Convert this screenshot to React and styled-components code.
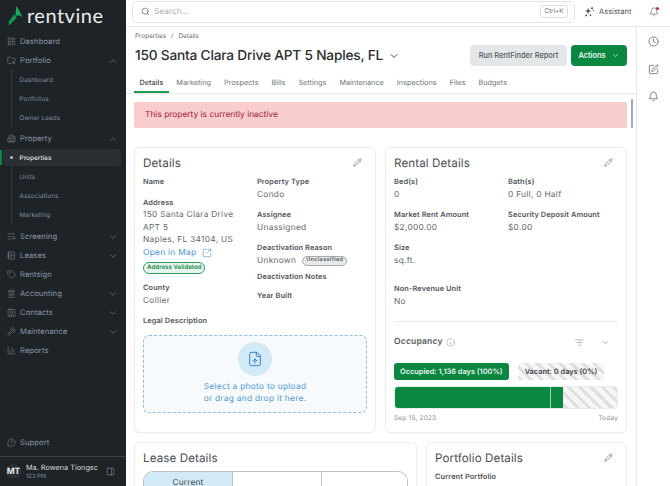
import React from 'react';
import styled, { createGlobalStyle } from 'styled-components';
import {
  Bell,
  Building2,
  ChartColumn,
  ChevronDown,
  ChevronUp,
  Clock,
  Contact,
  FileUp,
  FolderSearch,
  Info,
  Landmark,
  LayoutDashboard,
  ListFilter,
  MessageCircleQuestion,
  NotebookText,
  PanelRight,
  Pencil,
  Search,
  SquareArrowOutUpRight,
  SquarePen,
  Tag,
  TextSearch,
  Wrench,
} from 'lucide-react';

const GlobalStyle = createGlobalStyle`
  html, body {
    margin: 0;
    padding: 0;
    height: 100%;
    overflow: hidden;
    background: #fff;
    font-family: Inter, "Liberation Sans", sans-serif;
    text-rendering: geometricPrecision;
  }
  * {
    box-sizing: border-box;
  }
`;

const Shell = styled.div`
  display: flex;
  width: 670px;
  height: 486px;
  overflow: hidden;
`;

/* sidebar */
const Sidebar = styled.aside`
  flex: 0 0 126px;
  width: 126px;
  min-width: 0;
  overflow: hidden;
  display: flex;
  flex-direction: column;
  background: #1e2327;
  color: #8b95a6;
`;

const Brand = styled.div`
  display: flex;
  align-items: center;
  height: 32px;
  padding: 0 0 0 8px;
  gap: 4px;
`;

const BrandName = styled.span`
  color: #e9ebec;
  font-family: Lato, Inter, sans-serif;
  font-size: 20px;
  font-weight: 400;
  letter-spacing: 0.5px;
  line-height: 32px;
`;

const Nav = styled.nav`
  display: flex;
  flex-direction: column;
  flex: 1;
`;

const NavRow = styled.div`
  display: flex;
  align-items: center;
  height: 19px;
  padding: 0 8px 0 7px;
  gap: 4px;
  font-size: 7.6px;
  letter-spacing: 0.1px;
  margin-top: ${p => p.$top || 0}px;
  svg:first-child {
    flex: none;
    color: #7c8490;
  }
`;

const NavLabel = styled.span`
  flex: 1;
`;

const SubList = styled.div`
  position: relative;
  display: flex;
  flex-direction: column;
  &::before {
    content: '';
    position: absolute;
    left: 11px;
    top: 0;
    bottom: 0;
    width: 1px;
    background: #343a3f;
  }
`;

const SubRow = styled.div`
  position: relative;
  display: flex;
  align-items: center;
  height: ${p => (p.$active ? 17 : 19)}px;
  margin: ${p => (p.$active ? '1px 5px 1px 3px' : '0 5px 0 3px')};
  padding-left: 16.5px;
  font-size: 6.3px;
  letter-spacing: 0.1px;
  border-radius: 4px;
  color: ${p => (p.$active ? '#e4e7ea' : '#7f8a9c')};
  font-weight: ${p => (p.$active ? 500 : 400)};
  background: ${p => (p.$active ? '#2a2f33' : 'transparent')};
`;

const ActiveDot = styled.span`
  position: absolute;
  left: 7px;
  top: 7px;
  width: 3px;
  height: 3px;
  border-radius: 50%;
  background: #b5bbc2;
`;

const ActiveBar = styled.span`
  position: absolute;
  left: -3px;
  top: 1px;
  width: 2px;
  height: 15px;
  background: #0a8841;
`;

const UserBar = styled.div`
  display: flex;
  align-items: center;
  height: 30px;
  margin-top: 4px;
  padding: 0 11px 0 6px;
  border-top: 1px solid #3a3f43;
  gap: 5px;
`;

const Avatar = styled.div`
  flex: none;
  display: flex;
  align-items: center;
  justify-content: center;
  width: 15px;
  height: 15px;
  border-radius: 50%;
  background: #2a2f33;
  font-size: 8.5px;
  font-weight: 700;
  color: #e9ebec;
`;

const UserText = styled.div`
  flex: 1;
  min-width: 0;
  overflow: hidden;
  white-space: nowrap;
  font-size: 7.3px;
  line-height: 9px;
  color: #d5d8db;
  small {
    display: block;
    font-size: 5.8px;
    color: #7f8a9c;
  }
`;

/* main column */
const Main = styled.div`
  flex: 1;
  min-width: 0;
  display: flex;
  flex-direction: column;
`;

const TopBar = styled.header`
  flex: 0 0 27px;
  display: flex;
  align-items: center;
  padding: 0 11px 3px 6px;
  border-bottom: 1px solid #e8e9ea;
`;

const SearchBox = styled.div`
  flex: 0 0 443px;
  height: 22px;
  display: flex;
  align-items: center;
  padding: 0 6px 0 8px;
  gap: 4px;
  border: 1px solid #e3e4e5;
  border-radius: 5px;
  color: #a9adb1;
  font-size: 8.3px;
`;

const SearchText = styled.span`
  flex: 1;
`;

const Kbd = styled.span`
  padding: 1px 3.5px;
  border: 1px solid #dcdddf;
  border-radius: 3px;
  font-size: 6.3px;
  line-height: 9px;
  color: #6b7075;
`;

const Assistant = styled.div`
  display: flex;
  align-items: center;
  margin-left: 9px;
  gap: 4px;
  font-size: 7.5px;
  color: #4c5157;
  flex: 1;
`;

const BellWrap = styled.div`
  position: relative;
  display: flex;
  color: #55595e;
`;

const RedDot = styled.span`
  position: absolute;
  right: 0;
  top: 0;
  width: 3px;
  height: 3px;
  border-radius: 50%;
  background: #c8242f;
`;

const Body = styled.div`
  flex: 1;
  min-height: 0;
  display: flex;
`;

const Content = styled.main`
  position: relative;
  flex: 1;
  min-width: 0;
  overflow: hidden;
`;

const Rail = styled.div`
  flex: 0 0 34px;
  display: flex;
  flex-direction: column;
  align-items: center;
  padding-top: 9px;
  gap: 16.5px;
  border-left: 1px solid #e8e9ea;
  color: #55595e;
`;

const Crumbs = styled.div`
  display: flex;
  gap: 5px;
  padding: 3px 0 0 9px;
  font-size: 6.4px;
  line-height: 12px;
  color: #6a6f74;
`;

const TitleRow = styled.div`
  display: flex;
  align-items: center;
  height: 21px;
  margin-top: 3px;
  padding: 0 9px;
`;

const Title = styled.h1`
  margin: 0;
  font-size: 13.7px;
  font-weight: 500;
  letter-spacing: -0.2px;
  color: #2b2e31;
  white-space: nowrap;
`;

const TitleChevron = styled.span`
  display: flex;
  margin-left: 5px;
  color: #3c4044;
  flex: 1;
`;

const GhostButton = styled.button`
  height: 21px;
  padding: 0;
  margin-right: 4px;
  width: 97px;
  border: 0;
  border-radius: 4px;
  background: #e4e7e8;
  color: #53575b;
  font: 500 7.4px Inter, sans-serif;
  white-space: nowrap;
`;

const PrimaryButton = styled.button`
  display: flex;
  align-items: center;
  justify-content: center;
  gap: 5px;
  height: 21px;
  width: 56px;
  border: 0;
  border-radius: 4px;
  background: #0a8841;
  color: #e9f5ee;
  font: 600 7.4px Inter, sans-serif;
`;

const Tabs = styled.div`
  display: flex;
  height: 21px;
  margin-top: 7px;
  padding-left: 8px;
  gap: 2px;
  border-bottom: 1px solid #e8e9ea;
  box-shadow: 0 1px 2px rgba(0, 0, 0, 0.03);
`;

const Tab = styled.div`
  display: flex;
  align-items: center;
  height: 20px;
  padding: 0 5.5px;
  font-size: 7.3px;
  color: ${p => (p.$active ? '#3f4448' : '#70757a')};
  font-weight: ${p => (p.$active ? 500 : 400)};
  border-bottom: 2px solid ${p => (p.$active ? '#1e9a55' : 'transparent')};
  margin-bottom: -1px;
`;

const Scroller = styled.div`
  padding: 8px 9px 0 8px;
`;

const Alert = styled.div`
  display: flex;
  align-items: center;
  height: 26px;
  padding: 0 11px;
  border-radius: 2px;
  background: #f9cccd;
  color: #a0222e;
  font-size: 8.4px;
`;

const ScrollThumb = styled.span`
  position: absolute;
  left: 505px;
  top: 72px;
  width: 2px;
  height: 29px;
  border-radius: 1px;
  background: #a7abaf;
`;

const CardRow = styled.div`
  display: grid;
  grid-template-columns: ${p => p.$columns};
  gap: 9px;
  margin-top: ${p => p.$top}px;
`;

const Card = styled.section`
  border: 1px solid #ecedee;
  border-radius: 6px;
  background: #fff;
  padding: 8px 8px 0;
  height: ${p => p.$height || 'auto'};
  box-shadow: 0 1px 2px rgba(0, 0, 0, 0.03);
`;

const CardHead = styled.div`
  display: flex;
  align-items: center;
  justify-content: space-between;
  height: 13px;
  padding-right: 5px;
  margin-bottom: 7px;
  color: #55595e;
`;

const CardTitle = styled.h2`
  margin: 0;
  font-size: 11.6px;
  font-weight: 400;
  letter-spacing: 0.1px;
  color: #4a4e52;
`;

const Columns = styled.div`
  display: grid;
  grid-template-columns: 114px 1fr;
`;

const Stack = styled.div`
  display: flex;
  flex-direction: column;
`;

const Field = styled.div`
  margin-bottom: ${p => (p.$gap === undefined ? 8 : p.$gap)}px;
`;

const PortfolioField = styled(Field)`
  margin-top: 4px;
`;

const Label = styled.div`
  font-size: 7.4px;
  line-height: 12.5px;
  font-weight: 600;
  letter-spacing: 0.1px;
  color: #50545a;
`;

const Value = styled.div`
  font-size: 8.3px;
  line-height: 12.5px;
  letter-spacing: 0.3px;
  color: #5f6468;
`;

const MapLink = styled.a`
  display: flex;
  align-items: center;
  gap: 6px;
  font-size: 8.3px;
  line-height: 12.5px;
  letter-spacing: 0.3px;
  color: #3f8fd6;
`;

const Pill = styled.span`
  display: flex;
  align-items: center;
  width: fit-content;
  height: ${p => p.$height}px;
  padding: 0 3px;
  border: 1px solid ${p => p.$line};
  border-radius: 6px;
  background: ${p => p.$fill};
  color: ${p => p.$ink};
  font-size: ${p => p.$size}px;
  font-weight: 600;
  line-height: 1;
  white-space: nowrap;
`;

const UnknownLine = styled(Value)`
  display: flex;
  align-items: center;
  gap: 6px;
`;

const Upload = styled.div`
  height: 78px;
  margin-top: 2px;
  display: flex;
  flex-direction: column;
  align-items: center;
  padding-top: 6px;
  border: 1px dashed #8fbde3;
  border-radius: 6px;
  background: #f6fafd;
  color: #4a94d8;
  font-size: 8.3px;
  line-height: 12.5px;
  letter-spacing: 0.3px;
  text-align: center;
`;

const UploadIcon = styled.div`
  display: flex;
  align-items: center;
  justify-content: center;
  width: 34px;
  height: 34px;
  margin-bottom: 4.5px;
  border-radius: 50%;
  background: #d2e9f6;
  color: #3b80cc;
`;

const RentalGrid = styled.div`
  display: grid;
  grid-template-columns: 114px 1fr;
`;

const Divider = styled.div`
  height: 1px;
  margin-top: 5px;
  background: #e9eaeb;
`;

const OccupancyHead = styled.div`
  display: flex;
  align-items: center;
  height: 12px;
  margin-top: 14px;
  color: #7b8085;
`;

const OccupancyTitle = styled.span`
  flex: 1;
  display: flex;
  align-items: center;
  gap: 3px;
  font-size: 8.5px;
  font-weight: 600;
  letter-spacing: 0.2px;
  color: #55595e;
`;

const OccupancyTools = styled.div`
  display: flex;
  align-items: center;
  gap: 17px;
  padding-right: 8px;
`;

const Legend = styled.div`
  display: flex;
  gap: 9px;
  margin-top: 15px;
`;

const hatch = `repeating-linear-gradient(
  45deg,
  #dfdfe0 0,
  #dfdfe0 3px,
  #f6f6f6 3px,
  #f6f6f6 8px
)`;

const LegendChip = styled.span`
  display: flex;
  align-items: center;
  height: 17px;
  padding: 0 ${p => (p.$vacant ? 7 : 6)}px;
  border-radius: 3px;
  font-size: 7.4px;
  font-weight: 600;
  white-space: nowrap;
  color: ${p => (p.$vacant ? '#3f4448' : '#e9f5ee')};
  background: ${p => (p.$vacant ? hatch : '#0a8841')};
`;

const Timeline = styled.div`
  display: flex;
  height: 23px;
  margin-top: 6px;
  border-radius: 4px;
  overflow: hidden;
  background: ${hatch};
  border: 1px solid #ececec;
`;

const Filled = styled.div`
  width: 75.5%;
  background: #0a8841;
  position: relative;
`;

const Tick = styled.span`
  position: absolute;
  right: 12px;
  top: 0;
  bottom: 0;
  width: 1px;
  background: #9fd0b5;
`;

const DateRow = styled.div`
  display: flex;
  justify-content: space-between;
  margin-top: 4px;
  font-size: 6.5px;
  line-height: 10px;
  letter-spacing: 0.2px;
  color: #8a8e92;
`;

const LeaseTabs = styled.div`
  display: grid;
  grid-template-columns: 88px 89px 1fr;
  height: 30px;
  border: 1px solid #bdbfc1;
  border-bottom: 0;
  border-radius: 10px 10px 0 0;
  overflow: hidden;
  margin-top: 6px;
`;

const LeaseTab = styled.div`
  padding-top: 6px;
  font-size: 8.3px;
  line-height: 10px;
  letter-spacing: 0.2px;
  text-align: center;
  color: #3f4448;
  background: ${p => (p.$active ? '#d2e9f6' : '#fff')};
  border-left: ${p => (p.$first ? 0 : '1px solid #bdbfc1')};
`;

const sidebarIcon = { size: 9, strokeWidth: 1.5 };

const Chevron = ({ up }) => {
  const Icon = up ? ChevronUp : ChevronDown;
  return <Icon size={10} strokeWidth={1.5} color="#7c8490" />;
};

const Logo = () => (
  <svg width="15" height="20" viewBox="0 0 15 20">
    <path d="M8.5 0 L14.5 11 L10.8 9 L9 10.5 L7.6 6.5 Z" fill="#17b35c" />
    <path d="M6.9 7.5 L8.6 12 L1 19.5 L0.6 16 Z" fill="#0e9a4c" />
  </svg>
);

const AssistantIcon = () => (
  <svg width="11" height="11" viewBox="0 0 12 12" fill="#44484d">
    <path d="M4.5 2 L5.4 4.6 L8 5.5 L5.4 6.4 L4.5 9 L3.6 6.4 L1 5.5 L3.6 4.6 Z" />
    <circle cx="8.8" cy="2.4" r="1.1" />
    <circle cx="10.3" cy="5" r="0.7" />
    <circle cx="2.4" cy="10.3" r="1" />
    <circle cx="7" cy="10" r="0.9" />
  </svg>
);

const App = () => (
  <Shell>
    <GlobalStyle />
    <Sidebar>
      <Brand>
        <Logo />
        <BrandName>rentvine</BrandName>
      </Brand>
      <Nav>
        <NavRow>
          <LayoutDashboard {...sidebarIcon} />
          <NavLabel>Dashboard</NavLabel>
        </NavRow>
        <NavRow>
          <FolderSearch {...sidebarIcon} />
          <NavLabel>Portfolio</NavLabel>
          <Chevron up />
        </NavRow>
        <SubList>
          <SubRow>Dashboard</SubRow>
          <SubRow>Portfolios</SubRow>
          <SubRow>Owner Leads</SubRow>
        </SubList>
        <NavRow $top={2}>
          <Building2 {...sidebarIcon} />
          <NavLabel>Property</NavLabel>
          <Chevron up />
        </NavRow>
        <SubList>
          <SubRow $active>
            <ActiveBar />
            <ActiveDot />
            Properties
          </SubRow>
          <SubRow>Units</SubRow>
          <SubRow>Associations</SubRow>
          <SubRow>Marketing</SubRow>
        </SubList>
        <NavRow $top={3}>
          <TextSearch {...sidebarIcon} />
          <NavLabel>Screening</NavLabel>
          <Chevron />
        </NavRow>
        <NavRow>
          <NotebookText {...sidebarIcon} />
          <NavLabel>Leases</NavLabel>
          <Chevron />
        </NavRow>
        <NavRow>
          <Tag {...sidebarIcon} />
          <NavLabel>Rentsign</NavLabel>
        </NavRow>
        <NavRow>
          <Landmark {...sidebarIcon} />
          <NavLabel>Accounting</NavLabel>
          <Chevron />
        </NavRow>
        <NavRow>
          <Contact {...sidebarIcon} />
          <NavLabel>Contacts</NavLabel>
          <Chevron />
        </NavRow>
        <NavRow>
          <Wrench {...sidebarIcon} />
          <NavLabel>Maintenance</NavLabel>
          <Chevron />
        </NavRow>
        <NavRow>
          <ChartColumn {...sidebarIcon} />
          <NavLabel>Reports</NavLabel>
        </NavRow>
      </Nav>
      <NavRow>
        <MessageCircleQuestion {...sidebarIcon} />
        <NavLabel>Support</NavLabel>
      </NavRow>
      <UserBar>
        <Avatar>MT</Avatar>
        <UserText>
          Ma. Rowena Tiongsc
          <small>123 PM</small>
        </UserText>
        <PanelRight size={9} strokeWidth={1.5} color="#8b95a6" />
      </UserBar>
    </Sidebar>

    <Main>
      <TopBar>
        <SearchBox>
          <Search size={9} strokeWidth={1.8} color="#55595e" />
          <SearchText>Search...</SearchText>
          <Kbd>Ctrl+K</Kbd>
        </SearchBox>
        <Assistant>
          <AssistantIcon />
          Assistant
        </Assistant>
        <BellWrap>
          <Bell size={10} strokeWidth={1.5} />
          <RedDot />
        </BellWrap>
      </TopBar>
      <Body>
        <Content>
          <Crumbs>
            <span>Properties</span>
            <span>/</span>
            <span>Details</span>
          </Crumbs>
          <TitleRow>
            <Title>150 Santa Clara Drive APT 5 Naples, FL</Title>
            <TitleChevron>
              <ChevronDown size={12} strokeWidth={1.8} />
            </TitleChevron>
            <GhostButton>Run RentFinder Report</GhostButton>
            <PrimaryButton>
              Actions
              <ChevronDown size={9} strokeWidth={1.8} />
            </PrimaryButton>
          </TitleRow>
          <Tabs>
            <Tab $active>Details</Tab>
            <Tab>Marketing</Tab>
            <Tab>Prospects</Tab>
            <Tab>Bills</Tab>
            <Tab>Settings</Tab>
            <Tab>Maintenance</Tab>
            <Tab>Inspections</Tab>
            <Tab>Files</Tab>
            <Tab>Budgets</Tab>
          </Tabs>
          <ScrollThumb />
          <Scroller>
            <Alert>This property is currently inactive</Alert>
            <CardRow $columns="242px 242px" $top={19}>
              <Card $height="286px">
                <CardHead>
                  <CardTitle>Details</CardTitle>
                  <Pencil size={9} strokeWidth={1.5} />
                </CardHead>
                <Columns>
                  <Stack>
                    <Field>
                      <Label>Name</Label>
                    </Field>
                    <Field $gap={3}>
                      <Label>Address</Label>
                      <Value>150 Santa Clara Drive</Value>
                      <Value>APT 5</Value>
                      <Value>Naples, FL 34104, US</Value>
                      <MapLink>
                        Open in Map
                        <SquareArrowOutUpRight size={10} strokeWidth={1.4} />
                      </MapLink>
                    </Field>
                    <Field>
                      <Pill $height={12} $size={6.2} $line="#2f9a5f" $fill="#e9f6ef" $ink="#1c8a4e">
                        Address Validated
                      </Pill>
                    </Field>
                    <Field>
                      <Label>County</Label>
                      <Value>Collier</Value>
                    </Field>
                    <Field $gap={5.5}>
                      <Label>Legal Description</Label>
                    </Field>
                  </Stack>
                  <Stack>
                    <Field>
                      <Label>Property Type</Label>
                      <Value>Condo</Value>
                    </Field>
                    <Field>
                      <Label>Assignee</Label>
                      <Value>Unassigned</Value>
                    </Field>
                    <Field $gap={3.5}>
                      <Label>Deactivation Reason</Label>
                      <UnknownLine>
                        Unknown
                        <Pill $height={10} $size={5.6} $line="#a9acaf" $fill="#e7e8e9" $ink="#55595e">
                          Unclassified
                        </Pill>
                      </UnknownLine>
                    </Field>
                    <Field $gap={7}>
                      <Label>Deactivation Notes</Label>
                    </Field>
                    <Field>
                      <Label>Year Built</Label>
                    </Field>
                  </Stack>
                </Columns>
                <Upload>
                  <UploadIcon>
                    <FileUp size={16} strokeWidth={1.5} />
                  </UploadIcon>
                  <span>Select a photo to upload</span>
                  <span>or drag and drop it here.</span>
                </Upload>
              </Card>
              <Card $height="286px">
                <CardHead>
                  <CardTitle>Rental Details</CardTitle>
                  <Pencil size={9} strokeWidth={1.5} />
                </CardHead>
                <RentalGrid>
                  <Field>
                    <Label>Bed(s)</Label>
                    <Value>0</Value>
                  </Field>
                  <Field>
                    <Label>Bath(s)</Label>
                    <Value>0 Full, 0 Half</Value>
                  </Field>
                  <Field>
                    <Label>Market Rent Amount</Label>
                    <Value>$2,000.00</Value>
                  </Field>
                  <Field>
                    <Label>Security Deposit Amount</Label>
                    <Value>$0.00</Value>
                  </Field>
                  <Field $gap={16}>
                    <Label>Size</Label>
                    <Value>sq.ft.</Value>
                  </Field>
                  <Field />
                  <Field>
                    <Label>Non-Revenue Unit</Label>
                    <Value>No</Value>
                  </Field>
                </RentalGrid>
                <Divider />
                <OccupancyHead>
                  <OccupancyTitle>
                    Occupancy
                    <Info size={9} strokeWidth={1.3} color="#8a8e92" />
                  </OccupancyTitle>
                  <OccupancyTools>
                    <ListFilter size={9} strokeWidth={1.5} />
                    <ChevronDown size={9} strokeWidth={1.5} />
                  </OccupancyTools>
                </OccupancyHead>
                <Legend>
                  <LegendChip>Occupied: 1,136 days (100%)</LegendChip>
                  <LegendChip $vacant>Vacant: 0 days (0%)</LegendChip>
                </Legend>
                <Timeline>
                  <Filled>
                    <Tick />
                  </Filled>
                </Timeline>
                <DateRow>
                  <span>Sep 15, 2023</span>
                  <span>Today</span>
                </DateRow>
              </Card>
            </CardRow>
            <CardRow $columns="283px 201px" $top={9}>
              <Card>
                <CardHead>
                  <CardTitle>Lease Details</CardTitle>
                </CardHead>
                <LeaseTabs>
                  <LeaseTab $active $first>
                    Current
                  </LeaseTab>
                  <LeaseTab />
                  <LeaseTab />
                </LeaseTabs>
              </Card>
              <Card>
                <CardHead>
                  <CardTitle>Portfolio Details</CardTitle>
                  <Pencil size={9} strokeWidth={1.5} />
                </CardHead>
                <PortfolioField>
                  <Label>Current Portfolio</Label>
                </PortfolioField>
              </Card>
            </CardRow>
          </Scroller>
        </Content>
        <Rail>
          <Clock size={11} strokeWidth={1.6} />
          <SquarePen size={11} strokeWidth={1.6} />
          <Bell size={11} strokeWidth={1.6} />
        </Rail>
      </Body>
    </Main>
  </Shell>
);

export default App;
